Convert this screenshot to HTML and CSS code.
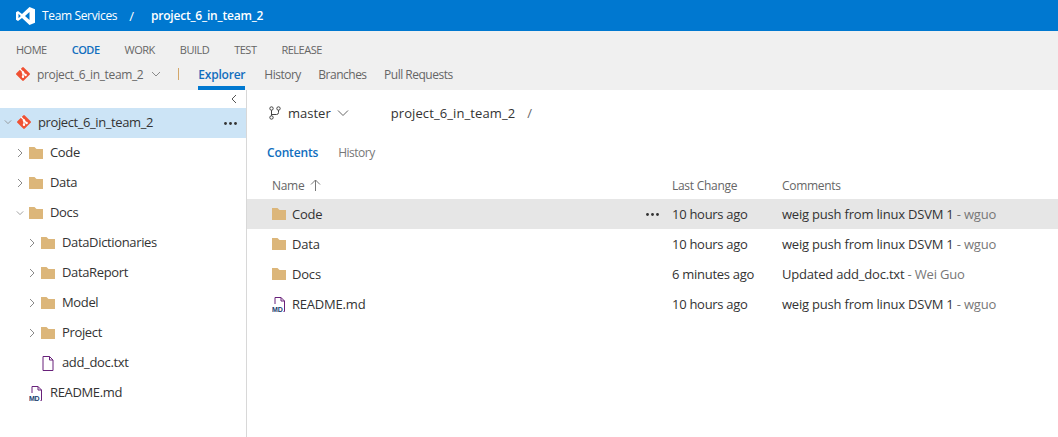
FILE: index.html
```html
<!DOCTYPE html>
<html lang="en">
<head>
  <meta charset="UTF-8" />
  <title>project_6_in_team_2 - Code</title>
  <link rel="stylesheet" href="styles.css">
</head>
<body>
  <svg class="defs" width="0" height="0">
    <symbol id="folder" viewBox="0 0 14 12"><path d="M0 0h5.500l2 2H14v10H0z" fill="#dcb67a"/></symbol>
    <symbol id="git" viewBox="0 0 14 14"><path d="M6.200 .4q.8-.8 1.600 0l5.800 5.800q.8.800 0 1.600l-5.800 5.800q-.8.800-1.600 0L.4 7.800q-.8-.8 0-1.600z" fill="#f05133"/><path d="M4 2l3 3v4.500M7 5.500l2.500 2.500" stroke="#fff" stroke-width="1.200" fill="none"/><circle cx="7" cy="5.500" r="1.200" fill="#fff"/><circle cx="7" cy="9.700" r="1.200" fill="#fff"/><circle cx="9.600" cy="8" r="1.200" fill="#fff"/></symbol>
    <symbol id="file" viewBox="0 0 12 15"><path d="M1 .5h6.500L11 4v10.500H1zM7.500 .5V4H11" fill="none" stroke="#68217a" stroke-width="1"/></symbol>
    <symbol id="right" viewBox="0 0 8 10"><path d="M2 1l4 4-4 4" fill="none" stroke="#8a8a8a" stroke-width="1"/></symbol>
    <symbol id="down" viewBox="0 0 10 8"><path d="M1 2l4 4 4-4" fill="none" stroke="#8a8a8a" stroke-width="1"/></symbol>
    <symbol id="more" viewBox="0 0 13 3"><circle cx="1.500" cy="1.500" r="1.400" fill="#333"/><circle cx="6.500" cy="1.500" r="1.400" fill="#333"/><circle cx="11.500" cy="1.500" r="1.400" fill="#333"/></symbol>
  </svg>

  <header class="topbar">
    <svg class="vs-logo" width="20" height="20" viewBox="0 0 20 20"><path d="M13.500 0L19 2.200v13.600L13.500 18 6 11 2 14 0 12.800V5.200L2 4l4 3zM13.500 5L9 9l4.500 4zM2.500 6.800v4.400L4.800 9z" fill="#fff" fill-rule="evenodd"/></svg>
    <span class="brand">Team Services</span>
    <span class="slash">/</span>
    <span class="project">project_6_in_team_2</span>
  </header>

  <nav class="hubs">
    <div class="hub-row">
      <a>HOME</a>
      <a class="on">CODE</a>
      <a>WORK</a>
      <a>BUILD</a>
      <a>TEST</a>
      <a>RELEASE</a>
    </div>
    <div class="tab-row">
      <svg class="git" width="14" height="14"><use href="#git"/></svg>
      <span class="repo">project_6_in_team_2</span>
      <svg class="repo-caret" width="10" height="8"><use href="#down"/></svg>
      <span class="divider"></span>
      <a class="tab on">Explorer</a>
      <a class="tab">History</a>
      <a class="tab">Branches</a>
      <a class="tab">Pull Requests</a>
    </div>
  </nav>

  <div class="main">
    <aside class="tree">
      <div class="collapse"><svg width="8" height="10" viewBox="0 0 8 10"><path d="M6 1L2 5l4 4" fill="none" stroke="#555" stroke-width="1"/></svg></div>
      <div class="node root">
        <svg class="twist" width="10" height="8"><use href="#down"/></svg>
        <svg class="git" width="14" height="14"><use href="#git"/></svg>
        <span>project_6_in_team_2</span>
        <svg class="dots" width="13" height="3"><use href="#more"/></svg>
      </div>
      <div class="node lvl1"><svg class="twist" width="8" height="10"><use href="#right"/></svg><svg class="ico" width="14" height="12"><use href="#folder"/></svg><span>Code</span></div>
      <div class="node lvl1"><svg class="twist" width="8" height="10"><use href="#right"/></svg><svg class="ico" width="14" height="12"><use href="#folder"/></svg><span>Data</span></div>
      <div class="node lvl1"><svg class="twist" width="8" height="10"><use href="#down"/></svg><svg class="ico" width="14" height="12"><use href="#folder"/></svg><span>Docs</span></div>
      <div class="node lvl2"><svg class="twist" width="8" height="10"><use href="#right"/></svg><svg class="ico" width="14" height="12"><use href="#folder"/></svg><span>DataDictionaries</span></div>
      <div class="node lvl2"><svg class="twist" width="8" height="10"><use href="#right"/></svg><svg class="ico" width="14" height="12"><use href="#folder"/></svg><span>DataReport</span></div>
      <div class="node lvl2"><svg class="twist" width="8" height="10"><use href="#right"/></svg><svg class="ico" width="14" height="12"><use href="#folder"/></svg><span>Model</span></div>
      <div class="node lvl2"><svg class="twist" width="8" height="10"><use href="#right"/></svg><svg class="ico" width="14" height="12"><use href="#folder"/></svg><span>Project</span></div>
      <div class="node lvl2"><i class="twist"></i><svg class="ico" width="14" height="15"><use href="#file"/></svg><span>add_doc.txt</span></div>
      <div class="node lvl1"><i class="twist"></i><svg class="ico" width="14" height="15" viewBox="0 0 14 15"><path d="M3 7V.5h6L12.500 4v10.500h-1M9 .5V4h3.500" fill="none" stroke="#68217a"/><text x="0" y="14.500" class="md-text">MD</text></svg><span>README.md</span></div>
    </aside>

    <section class="content">
      <div class="crumbs">
        <svg class="branch" width="12" height="14" viewBox="0 0 12 14"><g fill="none" stroke="#444" stroke-width="1"><circle cx="2.500" cy="2.500" r="1.700"/><circle cx="9.500" cy="2.500" r="1.700"/><circle cx="2.500" cy="11.500" r="1.700"/><path d="M2.500 4.200v5.600M9.500 4.200v2.300q0 2-2 2H2.500"/></g></svg>
        <span class="branch-name">master</span>
        <svg class="branch-caret" width="12" height="8" viewBox="0 0 12 8"><path d="M1 1.500l5 5 5-5" fill="none" stroke="#666" stroke-width="1"/></svg>
        <span class="path">project_6_in_team_2</span>
        <span class="path-sep">/</span>
      </div>
      <div class="subtabs">
        <a class="on">Contents</a>
        <a>History</a>
      </div>
      <div class="row head">
        <span class="c-name">Name <svg width="11" height="12" viewBox="0 0 11 12"><path d="M5.500 12V1M1 5.500l4.500-4.500 4.500 4.500" fill="none" stroke="#777" stroke-width="1"/></svg></span>
        <span class="c-date">Last Change</span>
        <span class="c-msg">Comments</span>
      </div>
      <div class="row hot">
        <span class="c-name"><svg class="ico" width="14" height="12"><use href="#folder"/></svg>Code<svg class="dots" width="13" height="3"><use href="#more"/></svg></span>
        <span class="c-date">10 hours ago</span>
        <span class="c-msg">weig push from linux DSVM 1 <em>- wguo</em></span>
      </div>
      <div class="row">
        <span class="c-name"><svg class="ico" width="14" height="12"><use href="#folder"/></svg>Data</span>
        <span class="c-date">10 hours ago</span>
        <span class="c-msg">weig push from linux DSVM 1 <em>- wguo</em></span>
      </div>
      <div class="row">
        <span class="c-name"><svg class="ico" width="14" height="12"><use href="#folder"/></svg>Docs</span>
        <span class="c-date">6 minutes ago</span>
        <span class="c-msg">Updated add_doc.txt <em>- Wei Guo</em></span>
      </div>
      <div class="row">
        <span class="c-name"><svg class="ico" width="14" height="15" viewBox="0 0 14 15"><path d="M3 7V.5h6L12.500 4v10.500h-1M9 .5V4h3.500" fill="none" stroke="#68217a"/><text x="0" y="14.500" class="md-text">MD</text></svg>README.md</span>
        <span class="c-date">10 hours ago</span>
        <span class="c-msg">weig push from linux DSVM 1 <em>- wguo</em></span>
      </div>
    </section>
  </div>
</body>
</html>
```

FILE: styles.css
```css
html, body {
  height: 100%;
}
body {
  margin: 0;
  display: flex;
  flex-direction: column;
  overflow: hidden;
  background: white;
  color: #333;
  font-family: "Open Sans", "Noto Sans", sans-serif;
  font-size: 12px;
}
svg {
  flex: none;
  display: block;
}
.defs {
  position: absolute;
}
.md-text {
  font-family: "Liberation Sans", sans-serif;
  font-size: 7px;
  font-weight: bold;
  fill: #1a3e6e;
}

.topbar {
  height: 31px;
  flex: none;
  display: flex;
  align-items: center;
  padding-left: 16px;
  background: #0078d0;
  color: white;
}
.vs-logo {
  margin-top: 2px;
}
.brand {
  margin-left: 6px;
  letter-spacing: -0.35px;
}
.slash {
  margin-left: 12px;
  font-size: 13px;
}
.project {
  margin-left: 17px;
  font-weight: 600;
  letter-spacing: -0.2px;
}

.hubs {
  height: 59px;
  flex: none;
  box-sizing: border-box;
  padding: 9px 0 0 16px;
  background: #f0f0f0;
  color: #666;
}
.hub-row {
  height: 18px;
  display: flex;
  align-items: center;
  gap: 25px;
  font-size: 11px;
  letter-spacing: -0.5px;
}
.hub-row .on,
.tab.on {
  color: #106ebe;
  font-weight: 600;
}
.tab-row {
  height: 32px;
  display: flex;
  align-items: center;
}
.repo {
  margin-left: 7px;
  letter-spacing: -0.36px;
}
.repo-caret {
  margin-left: 8px;
}
.divider {
  width: 1px;
  height: 12px;
  margin: 0 19px 0 17px;
  background: #d3a76a;
}
.tab {
  margin-top: 1px;
  margin-right: 17.5px;
  letter-spacing: -0.5px;
}
.tab.on {
  align-self: flex-start;
  height: 28px;
  line-height: 33px;
  margin-top: 0;
  margin-right: 19px;
  border-bottom: 4px solid #0078d0;
  letter-spacing: -0.22px;
}

.main {
  flex: 1;
  display: flex;
  min-height: 0;
}
.tree {
  width: 246px;
  flex: none;
  border-right: 1px solid #d8d8d8;
}
.collapse {
  height: 18px;
  display: flex;
  justify-content: flex-end;
  align-items: center;
  padding-right: 8px;
}
.node {
  height: 30px;
  display: flex;
  align-items: center;
  font-size: 13px;
  letter-spacing: -0.35px;
}
.node span {
  margin-bottom: 2px;
}
.node.root {
  padding-left: 4px;
  background: #cce4f6;
  letter-spacing: -0.4px;
}
.root .git,
.root .twist {
  margin-bottom: 2px;
}
.root span {
  margin-left: 7px;
}
.dots {
  margin-left: auto;
  margin-right: 9px;
}
.row .dots {
  margin-right: 13px;
}
.lvl1 {
  padding-left: 16px;
}
.lvl2 {
  padding-left: 28px;
}
.twist {
  width: 8px;
  margin-right: 5px;
}
.node .ico {
  margin-right: 7px;
}

.content {
  flex: 1;
  min-width: 0;
}
.crumbs {
  height: 46px;
  display: flex;
  align-items: center;
  padding-left: 22px;
  font-size: 13px;
}
.branch-name {
  margin-left: 7px;
}
.branch-caret {
  margin-left: 6px;
}
.path {
  margin-left: 42px;
  letter-spacing: 0.1px;
}
.path-sep {
  margin-left: 12px;
  color: #666;
}
.subtabs {
  height: 33px;
  display: flex;
  align-items: center;
  gap: 20px;
  padding-left: 20px;
  color: #777;
  letter-spacing: -0.5px;
}
.subtabs .on {
  color: #106ebe;
  font-weight: 600;
  letter-spacing: -0.15px;
}
.row {
  height: 30px;
  display: flex;
  align-items: center;
  font-size: 13px;
  letter-spacing: -0.2px;
}
.row.head {
  padding-top: 2px;
  box-sizing: border-box;
  font-size: 12px;
  color: #666;
  letter-spacing: -0.3px;
}
.row.hot {
  background: #e6e6e6;
}
.c-name {
  width: 425px;
  flex: none;
  display: flex;
  align-items: center;
  gap: 6px;
  padding-left: 25px;
  box-sizing: border-box;
}
.c-date {
  width: 110px;
  flex: none;
  letter-spacing: -0.28px;
}
.c-msg em {
  font-style: normal;
  color: #777;
}
```
